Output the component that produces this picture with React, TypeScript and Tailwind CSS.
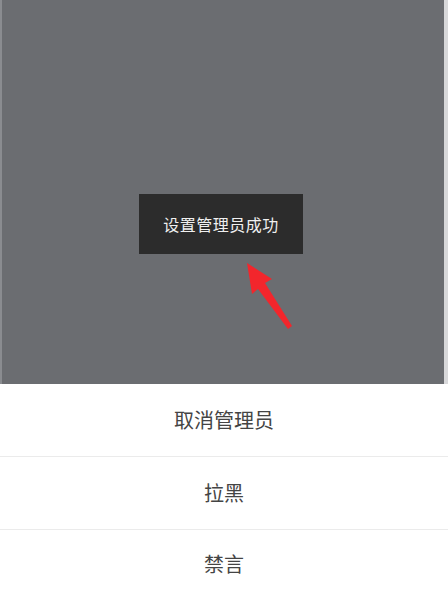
import React from "react";

const cjk = { fontFamily: '"Noto Sans CJK SC", "Noto Sans", sans-serif' };

// action sheet rows
const actions = ["取消管理员", "拉黑", "禁言"];

export default function App() {
  return (
    <div className="w-[448px] h-[597px] flex flex-col bg-white overflow-hidden" style={cjk}>
      <div className="relative h-[384px] shrink-0 flex bg-[#6b6d71]">
        <div className="w-[2px] bg-[#8a8c90]" />
        <div className="flex-1 flex flex-col items-center pt-[194px] pr-[4px]">
          <div className="w-[164px] h-[60px] bg-[#2c2c2c] flex items-center justify-center text-[16px] text-[#f0f0f0] tracking-[0.5px]">
            设置管理员成功
          </div>
        </div>
        <div className="w-[4px] bg-[#d8d8da]" />
        {/* red arrow pointing at the toast */}
        <svg className="absolute left-[236px] top-[256px]" width="64" height="80" viewBox="0 0 64 80">
          <path d="M11 7 L36 23 L29 27 L56 70 L52 73 L22 33 L16 38 Z" fill="#f2262c" />
        </svg>
      </div>
      <div className="flex-1 flex flex-col text-[20px] text-[#444]">
        <div className="h-[73px] flex items-center justify-center border-b border-[#ebebeb]">{actions[0]}</div>
        <div className="h-[73px] flex items-center justify-center border-b border-[#ebebeb]">{actions[1]}</div>
        <div className="flex-1 flex items-center justify-center">{actions[2]}</div>
      </div>
    </div>
  );
}
